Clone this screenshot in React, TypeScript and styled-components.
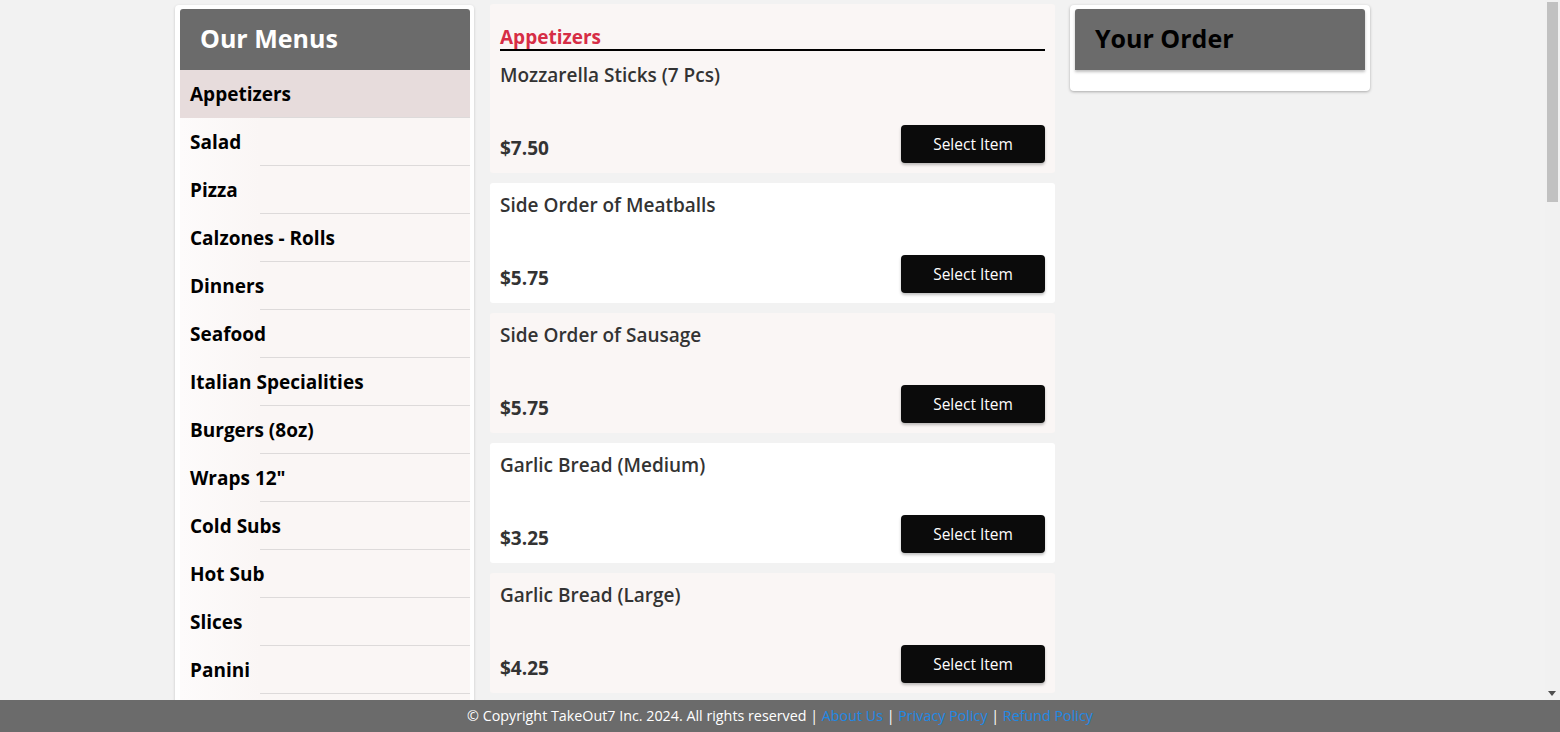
import React from "react";
import styled, { createGlobalStyle } from "styled-components";

const Global = createGlobalStyle`
  html, body { margin: 0; padding: 0; height: 100%; overflow: hidden; }
  body { background: #f2f2f2; font-family: "Open Sans", "Liberation Sans", sans-serif; }
  #root { height: 100%; }
  * { box-sizing: border-box; }
`;

const Shell = styled.div`
  height: 100vh;
  display: flex;
  flex-direction: column;
`;

const Body = styled.div`
  flex: 1;
  min-height: 0;
  display: flex;
`;

const Scroller = styled.div`
  flex: 1;
  overflow-y: auto;
  scrollbar-width: none;
  &::-webkit-scrollbar {
    display: none;
  }
`;

const Rail = styled.div`
  position: relative;
  width: 15px;
  background: #f1f1f1;
`;

const Thumb = styled.div`
  position: absolute;
  top: 2px;
  left: 2px;
  right: 2px;
  height: 200px;
  background: #c1c1c1;
`;

const Arrow = styled.div`
  position: absolute;
  bottom: 4px;
  left: 3px;
  width: 0;
  height: 0;
  border-left: 4.5px solid transparent;
  border-right: 4.5px solid transparent;
  border-top: 5px solid #505050;
`;

const Layout = styled.div`
  width: 1195px;
  margin: 0 auto;
  display: grid;
  grid-template-columns: 300px 565px 300px;
  column-gap: 15px;
  align-items: start;
  padding: 4px 0 20px;
`;

const SidePanel = styled.aside`
  width: 299px;
  background: #fff;
  border-radius: 4px;
  box-shadow: 0 1px 3px rgba(0, 0, 0, 0.18);
  padding: 4px 4px 0 5px;
  margin-top: 1px;
`;

const PanelHeader = styled.div<{ $dark?: boolean }>`
  background: #6b6b6b;
  height: 61px;
  border-radius: 3px 3px 0 0;
  display: flex;
  align-items: center;
  padding-left: 20px;
  padding-bottom: 4px;
  color: ${(p) => (p.$dark ? "#000" : "#fff")};
  font-weight: 700;
  font-size: 25px;
  box-shadow: ${(p) => (p.$dark ? "0 2px 3px rgba(0,0,0,0.25)" : "none")};
`;

const CatList = styled.ul`
  list-style: none;
  margin: 0;
  padding: 0;
`;

const CatItem = styled.li<{ $active?: boolean }>`
  position: relative;
  height: 48px;
  display: flex;
  align-items: center;
  padding-left: 10px;
  font-size: 19px;
  font-weight: 700;
  color: #000;
  background: ${(p) =>
    p.$active ? "#e7dcdc" : "linear-gradient(90deg, #fdfbfb 0, #faf6f5 80px)"};
  &::after {
    content: "";
    position: absolute;
    left: 80px;
    right: 0;
    bottom: 0;
    height: 1px;
    background: #dddada;
  }
`;

const Main = styled.main`
  display: flex;
  flex-direction: column;
  gap: 10px;
`;

const ItemCard = styled.div<{ $alt: boolean; $first?: boolean }>`
  background: ${(p) => (p.$alt ? "#fff" : "#faf6f5")};
  border-radius: 3px;
  padding: ${(p) => (p.$first ? "22px 10px 10px" : "10px")};
  display: flex;
  flex-direction: column;
`;

const SectionTitle = styled.h2`
  margin: 0 0 12px;
  color: #d62d45;
  font-size: 19px;
  font-weight: 700;
  line-height: 22px;
  padding-bottom: 1px;
  border-bottom: 2px solid #000;
`;

const ItemName = styled.div`
  font-size: 19px;
  font-weight: 600;
  color: #333;
  line-height: 24px;
  height: 62px;
`;

const ItemFoot = styled.div`
  display: flex;
  justify-content: space-between;
  align-items: center;
`;

const Price = styled.div`
  font-size: 19px;
  font-weight: 700;
  color: #333;
  line-height: 24px;
  margin-top: 8px;
`;

const SelectBtn = styled.button`
  width: 144px;
  height: 38px;
  background: #0b0b0b;
  color: #fff;
  border: none;
  border-radius: 4px;
  font-family: inherit;
  font-size: 15.5px;
  box-shadow: 0 2px 3px rgba(0, 0, 0, 0.25);
  cursor: pointer;
`;

const OrderPanel = styled.aside`
  background: #fff;
  border-radius: 4px;
  box-shadow: 0 1px 3px rgba(0, 0, 0, 0.3);
  padding: 4px 5px 21px;
  margin-top: 1px;
`;

const Footer = styled.footer`
  height: 32px;
  line-height: 32px;
  background: #6b6b6b;
  color: #fff;
  font-size: 14.3px;
  text-align: center;
  white-space: nowrap;
`;

const FootLink = styled.a`
  color: #1e88e5;
  text-decoration: none;
`;

const categories = [
  "Appetizers",
  "Salad",
  "Pizza",
  "Calzones - Rolls",
  "Dinners",
  "Seafood",
  "Italian Specialities",
  "Burgers (8oz)",
  'Wraps 12"',
  "Cold Subs",
  "Hot Sub",
  "Slices",
  "Panini",
  "Desserts",
  "Beverages",
  "Sides",
];

const items = [
  ["Mozzarella Sticks (7 Pcs)", "$7.50"],
  ["Side Order of Meatballs", "$5.75"],
  ["Side Order of Sausage", "$5.75"],
  ["Garlic Bread (Medium)", "$3.25"],
  ["Garlic Bread (Large)", "$4.25"],
  ["Garlic Bread with Cheese", "$5.25"],
  ["French Fries", "$4.50"],
  ["Cheese Fries", "$5.50"],
  ["Onion Rings", "$5.50"],
  ["Chicken Fingers (5 Pcs)", "$8.95"],
  ["Buffalo Wings (10 Pcs)", "$11.95"],
  ["Fried Calamari", "$12.95"],
  ["Jalapeno Poppers (6 Pcs)", "$7.25"],
  ["Zeppole (12 Pcs)", "$6.50"],
  ["Fried Ravioli", "$7.95"],
  ["Potato Croquettes", "$6.25"],
  ["Rice Balls (2 Pcs)", "$6.95"],
  ["Stuffed Mushrooms", "$7.95"],
];

export default function App() {
  return (
    <>
      <Global />
      <Shell>
        <Body>
          <Scroller>
            <Layout>
              <SidePanel>
                <PanelHeader>Our Menus</PanelHeader>
                <CatList>
                  {categories.map((c, i) => (
                    <CatItem key={c} $active={i === 0}>
                      {c}
                    </CatItem>
                  ))}
                </CatList>
              </SidePanel>
              <Main>
                {items.map(([name, price], i) => (
                  <ItemCard key={name} $alt={i % 2 === 1} $first={i === 0}>
                    {i === 0 && <SectionTitle>Appetizers</SectionTitle>}
                    <ItemName>{name}</ItemName>
                    <ItemFoot>
                      <Price>{price}</Price>
                      <SelectBtn>Select Item</SelectBtn>
                    </ItemFoot>
                  </ItemCard>
                ))}
              </Main>
              <OrderPanel>
                <PanelHeader $dark>Your Order</PanelHeader>
              </OrderPanel>
            </Layout>
          </Scroller>
          <Rail aria-hidden>
            <Thumb />
            <Arrow />
          </Rail>
        </Body>
        <Footer>
          © Copyright TakeOut7 Inc. 2024. All rights reserved |{" "}
          <FootLink href="#">About Us</FootLink> |{" "}
          <FootLink href="#">Privacy Policy</FootLink> |{" "}
          <FootLink href="#">Refund Policy</FootLink>
        </Footer>
      </Shell>
    </>
  );
}
